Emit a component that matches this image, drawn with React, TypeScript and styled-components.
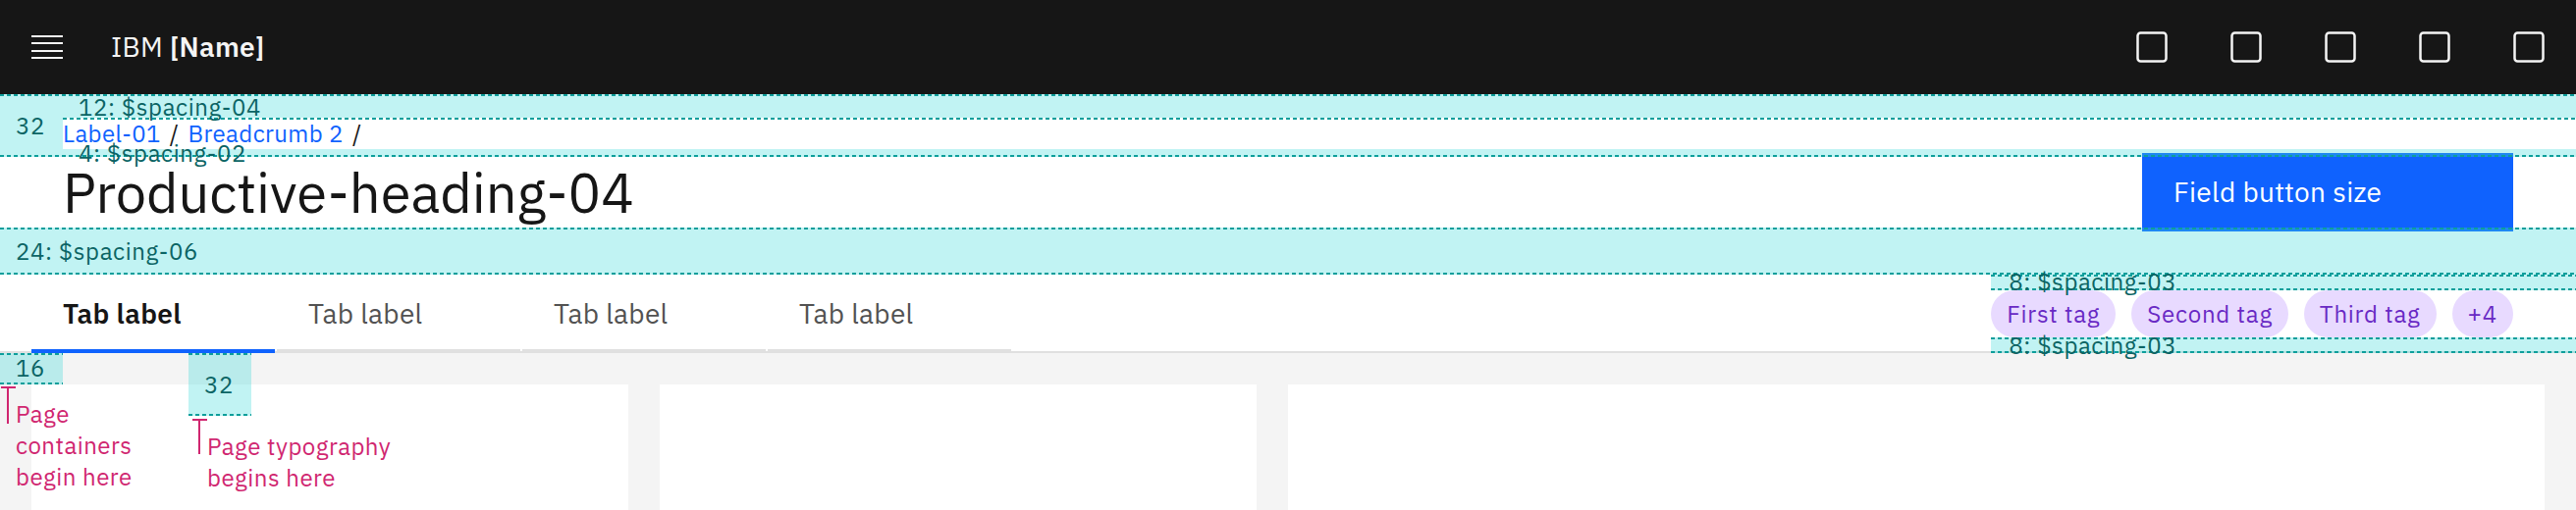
import React from "react";
import styled, { createGlobalStyle, css } from "styled-components";

const FONT = `"IBM Plex Sans", Roboto, "Liberation Sans", Arial, sans-serif`;
const TEAL_FILL = "rgba(61, 219, 217, 0.32)";
const TEAL_LINE = "#0d9e9b";
const TEAL_TEXT = "#0b6464";
const MAGENTA = "#d02670";

const dash = (pos: "top" | "bottom") =>
  `repeating-linear-gradient(90deg, ${TEAL_LINE} 0 4px, transparent 4px 7px) left ${pos} / 100% 2px no-repeat`;

const bandBg = (top: boolean, bottom: boolean) => {
  const layers: string[] = [];
  if (top) layers.push(dash("top"));
  if (bottom) layers.push(dash("bottom"));
  layers.push(TEAL_FILL);
  return layers.join(", ");
};

const GlobalStyle = createGlobalStyle`
  html, body { margin: 0; padding: 0; }
  body {
    background: #f4f4f4;
    font-family: ${FONT};
    color: #161616;
    -webkit-font-smoothing: antialiased;
  }
  * { box-sizing: border-box; }
`;

const Shell = styled.div`
  width: 2624px;
  min-height: 520px;
  display: flex;
  flex-direction: column;
`;

/* ---------- top bar ---------- */
const TopBar = styled.header`
  height: 96px;
  background: #161616;
  display: flex;
  align-items: center;
  flex-shrink: 0;
`;

const MenuButton = styled.div`
  width: 96px;
  height: 96px;
  display: flex;
  align-items: center;
  justify-content: center;
`;

const BrandName = styled.div`
  margin-left: 17px;
  font-size: 28px;
  line-height: 36px;
  color: #f4f4f4;
  letter-spacing: 0.3px;
  strong { font-weight: 600; }
`;

const Actions = styled.div`
  margin-left: auto;
  display: flex;
`;

const ActionButton = styled.div`
  width: 96px;
  height: 96px;
  display: flex;
  align-items: center;
  justify-content: center;
`;

/* ---------- page header ---------- */
const PageHeader = styled.section`
  background: #ffffff;
  border-bottom: 2px solid #e0e0e0;
  display: flex;
  flex-direction: column;
`;

const BreadcrumbZone = styled.div`
  position: relative;
  z-index: 1;
  padding: 24px 0 8px 64px;
  background: ${bandBg(true, true)};
`;

const Breadcrumb = styled.nav`
  height: 32px;
  background: ${dash("top")}, #ffffff;
  display: flex;
  align-items: center;
  font-size: 24px;
  line-height: 32px;
  letter-spacing: 0.4px;
`;

const Crumb = styled.span`
  color: #0f62fe;
`;

const Slash = styled.span`
  color: #161616;
  margin: 0 9px;
`;

const SpecLabel = styled.span<{ $top: number; $left: number }>`
  position: absolute;
  top: ${(p) => p.$top}px;
  left: ${(p) => p.$left}px;
  font-size: 24px;
  line-height: 24px;
  letter-spacing: 0.6px;
  color: ${TEAL_TEXT};
  white-space: nowrap;
  pointer-events: none;
`;

const TitleRow = styled.div`
  height: 72px;
  padding: 0 64px;
  display: flex;
  align-items: center;
  justify-content: space-between;
`;

const Title = styled.h1`
  margin: 0;
  font-size: 56px;
  line-height: 72px;
  font-weight: 400;
  color: #161616;
`;

const FieldButton = styled.button`
  width: 378px;
  height: 80px;
  flex-shrink: 0;
  padding: 0 0 0 32px;
  border: none;
  background: #0f62fe;
  color: #ffffff;
  font-family: ${FONT};
  font-size: 28px;
  line-height: 36px;
  letter-spacing: 0.32px;
  text-align: left;
`;

const Band = styled.div<{ $h: number; $top?: boolean; $bottom?: boolean }>`
  position: relative;
  z-index: 1;
  height: ${(p) => p.$h}px;
  background: ${(p) => bandBg(!!p.$top, !!p.$bottom)};
`;

const TabsRow = styled.div`
  height: 78px;
  display: flex;
`;

const TabList = styled.div`
  display: flex;
  gap: 2px;
  padding-left: 32px;
`;

const Tab = styled.div<{ $selected?: boolean }>`
  width: 248px;
  padding: 4px 0 0 32px;
  display: flex;
  align-items: center;
  font-size: 28px;
  line-height: 36px;
  letter-spacing: 0.32px;
  ${(p) =>
    p.$selected
      ? css`
          height: 80px;
          margin-bottom: -2px;
          font-weight: 600;
          color: #161616;
          border-bottom: 4px solid #0f62fe;
        `
      : css`
          height: 78px;
          font-weight: 400;
          color: #525252;
          border-bottom: 2px solid #e0e0e0;
        `}
`;

const TagColumn = styled.div`
  margin-left: auto;
  height: 80px;
  margin-bottom: -2px;
  display: flex;
  flex-direction: column;
`;

const TagRow = styled.div`
  height: 48px;
  padding-right: 64px;
  display: flex;
  gap: 16px;
  background: #ffffff;
`;

const Tag = styled.span`
  height: 48px;
  padding: 0 16px;
  border-radius: 24px;
  background: #e8daff;
  color: #6929c4;
  font-size: 24px;
  line-height: 32px;
  letter-spacing: 0.8px;
  display: inline-flex;
  align-items: center;
`;

/* ---------- content ---------- */
const Content = styled.main`
  position: relative;
  padding: 32px;
  background: #f4f4f4;
`;

const CardGrid = styled.div`
  display: grid;
  grid-template-columns: 608px 608px 1fr;
  gap: 32px;
`;

const Card = styled.div`
  height: 420px;
  background: #ffffff;
`;

const SpecBox = styled.div<{ $left: number; $w: number; $h: number }>`
  position: absolute;
  top: 0;
  left: ${(p) => p.$left}px;
  width: ${(p) => p.$w}px;
  height: ${(p) => p.$h}px;
  background: ${bandBg(true, true)};
  z-index: 2;
`;

const Callout = styled.div<{ $left: number; $top: number }>`
  position: absolute;
  left: ${(p) => p.$left}px;
  top: ${(p) => p.$top}px;
  z-index: 2;
`;

const CalloutMark = styled.svg`
  position: absolute;
  left: 0;
  top: 0;
`;

const CalloutText = styled.div`
  margin-left: 16px;
  padding-top: 12px;
  font-size: 24px;
  line-height: 32px;
  letter-spacing: 0.5px;
  color: ${MAGENTA};
  white-space: pre-line;
`;

const HamburgerIcon = () => (
  <svg width="32" height="26" viewBox="0 0 32 26" fill="#f4f4f4">
    <rect x="0" y="1" width="32" height="2" />
    <rect x="0" y="8" width="32" height="2" />
    <rect x="0" y="16" width="32" height="2" />
    <rect x="0" y="23" width="32" height="2" />
  </svg>
);

const SquareIcon = () => (
  <svg width="32" height="32" viewBox="0 0 32 32">
    <rect x="1.5" y="1.5" width="29" height="29" rx="3" fill="none" stroke="#f4f4f4" strokeWidth="2.5" />
  </svg>
);

const TMark = ({ len }: { len: number }) => (
  <CalloutMark width="18" height={len} viewBox={`0 0 18 ${len}`}>
    <rect x="1" y="0" width="15" height="2" fill={MAGENTA} />
    <rect x="7" y="0" width="2" height={len} fill={MAGENTA} />
  </CalloutMark>
);

export default function App() {
  return (
    <>
      <GlobalStyle />
      <Shell>
        <TopBar>
          <MenuButton>
            <HamburgerIcon />
          </MenuButton>
          <BrandName>
            IBM <strong>[Name]</strong>
          </BrandName>
          <Actions>
            {[0, 1, 2, 3, 4].map((i) => (
              <ActionButton key={i}>
                <SquareIcon />
              </ActionButton>
            ))}
          </Actions>
        </TopBar>

        <PageHeader>
          <BreadcrumbZone>
            <SpecLabel $top={1} $left={80}>12: $spacing-04</SpecLabel>
            <SpecLabel $top={20} $left={16}>32</SpecLabel>
            <Breadcrumb>
              <Crumb>Label-01</Crumb>
              <Slash>/</Slash>
              <Crumb>Breadcrumb 2</Crumb>
              <Slash>/</Slash>
            </Breadcrumb>
            <SpecLabel $top={48} $left={80}>4: $spacing-02</SpecLabel>
          </BreadcrumbZone>

          <TitleRow>
            <Title>Productive-heading-04</Title>
            <FieldButton>Field button size</FieldButton>
          </TitleRow>

          <Band $h={48} $top $bottom>
            <SpecLabel $top={12} $left={16}>24: $spacing-06</SpecLabel>
          </Band>

          <TabsRow>
            <TabList>
              <Tab $selected>Tab label</Tab>
              <Tab>Tab label</Tab>
              <Tab>Tab label</Tab>
              <Tab>Tab label</Tab>
            </TabList>
            <TagColumn>
              <Band $h={16} $top $bottom>
                <SpecLabel $top={-5} $left={18}>8: $spacing-03</SpecLabel>
              </Band>
              <TagRow>
                <Tag>First tag</Tag>
                <Tag>Second tag</Tag>
                <Tag>Third tag</Tag>
                <Tag>+4</Tag>
              </TagRow>
              <Band $h={16} $top $bottom>
                <SpecLabel $top={-4} $left={18}>8: $spacing-03</SpecLabel>
              </Band>
            </TagColumn>
          </TabsRow>
        </PageHeader>

        <Content>
          <SpecBox $left={0} $w={64} $h={32}>
            <SpecLabel $top={3} $left={16}>16</SpecLabel>
          </SpecBox>
          <SpecBox $left={192} $w={64} $h={64}>
            <SpecLabel $top={20} $left={16}>32</SpecLabel>
          </SpecBox>
          <Callout $left={0} $top={34}>
            <TMark len={38} />
            <CalloutText>{"Page\ncontainers\nbegin here"}</CalloutText>
          </Callout>
          <Callout $left={195} $top={67}>
            <TMark len={36} />
            <CalloutText>{"Page typography\nbegins here"}</CalloutText>
          </Callout>
          <CardGrid>
            <Card />
            <Card />
            <Card />
          </CardGrid>
        </Content>
      </Shell>
    </>
  );
}
